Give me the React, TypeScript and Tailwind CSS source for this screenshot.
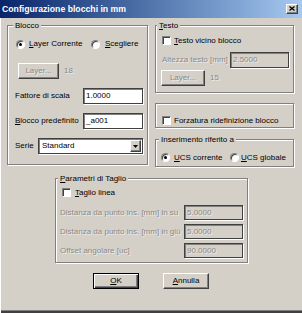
import React from 'react';

const dis = 'text-[#8a8a8a] [text-shadow:1px_1px_0_rgba(255,255,255,0.6)]';

const Group: React.FC<{ label?: React.ReactNode; labelClass?: string; className?: string; children?: React.ReactNode }> = ({
  label,
  labelClass = '',
  className = '',
  children,
}) => (
  <div className={`flex flex-col border border-[#808080] shadow-[inset_1px_1px_0_#ffffff,1px_1px_0_#ffffff] ${className}`}>
    {label && (
      <div className={`-mt-[6px] h-[11px] w-fit bg-[#d4d0c8] px-[2px] leading-[11px] ${labelClass}`}>{label}</div>
    )}
    {children}
  </div>
);

const Radio: React.FC<{ checked?: boolean }> = ({ checked }) => (
  <span className="flex h-[9px] w-[9px] shrink-0 items-center justify-center rounded-full border border-[#808080] border-r-white border-b-white bg-white shadow-[inset_1px_1px_0_#404040]">
    {checked && <span className="h-[3px] w-[3px] rounded-full bg-black" />}
  </span>
);

const Check: React.FC = () => (
  <span className="h-[9px] w-[9px] shrink-0 border border-[#808080] border-r-white border-b-white bg-white shadow-[inset_1px_1px_0_#404040]" />
);

const Field: React.FC<{ value: string; disabled?: boolean; className?: string }> = ({ value, disabled, className = '' }) => (
  <div
    className={`flex items-center border border-[#404040] pl-[2px] shadow-[inset_1px_1px_0_#808080,1px_1px_0_#ffffff] ${
      disabled ? `bg-[#d4d0c8] ${dis}` : 'bg-white'
    } ${className}`}
  >
    {value}
  </div>
);

const Btn: React.FC<{ children: React.ReactNode; disabled?: boolean; def?: boolean; className?: string }> = ({
  children,
  disabled,
  def,
  className = '',
}) => (
  <div
    className={`flex items-center justify-center bg-[#d4d0c8] ${
      def
        ? 'border border-black shadow-[inset_1px_1px_0_#ffffff,inset_-1px_-1px_0_#404040,inset_-2px_-2px_0_#808080]'
        : 'border border-t-white border-l-white border-r-[#404040] border-b-[#404040] shadow-[inset_-1px_-1px_0_#808080]'
    } ${disabled ? dis : ''} ${className}`}
  >
    {children}
  </div>
);

export default function App() {
  return (
    <div className="flex h-[313px] w-[302px] flex-col overflow-hidden bg-[#d4d0c8] font-['Liberation_Sans',Arial,sans-serif] text-[8px] leading-none text-black shadow-[inset_1px_0_0_#ffffff,inset_0_-2px_0_#404040,inset_0_-3px_0_#808080]">
      {/* title bar */}
      <div className="flex h-[18px] shrink-0 items-center justify-between bg-gradient-to-r from-[#0a246a] to-[#a6caf0] pl-[2px] pr-[4px]">
        <span className="text-[8.7px] font-bold text-white">Configurazione blocchi in mm</span>
        <span className="mt-[-1px] flex h-[10px] w-[12px] items-center justify-center border border-t-white border-l-white border-r-[#404040] border-b-[#404040] bg-[#d4d0c8] shadow-[inset_-1px_-1px_0_#808080]">
          <svg width="6" height="5" viewBox="0 0 6 5">
            <path d="M0.5 0.5 L5.5 4.5 M5.5 0.5 L0.5 4.5" stroke="#000" strokeWidth="1.3" />
          </svg>
        </span>
      </div>

      <div className="mt-[7px] flex items-start gap-[7px] pl-[7px]">
        {/* Blocco */}
        <Group label="Blocco" labelClass="ml-[5px]" className="h-[140px] w-[141px]">
          <div className="mt-[5px] flex h-[16px] items-center pl-[8px]">
            <div className="flex w-[75px] items-center gap-[4px]">
              <Radio checked />
              <span>
                <u>L</u>ayer Corrente
              </span>
            </div>
            <div className="flex items-center gap-[5px]">
              <Radio />
              <span>
                <u>S</u>cegliere
              </span>
            </div>
          </div>
          <div className="mt-[11px] flex h-[16px] items-center gap-[5px] pl-[10px]">
            <Btn disabled className="h-[16px] w-[41px]">
              Layer...
            </Btn>
            <span className={dis}>18</span>
          </div>
          <div className="mt-[9px] flex h-[16px] items-center pl-[7px] pr-[4px]">
            <span>Fattore di scala</span>
            <Field value="1.0000" className="ml-auto h-[16px] w-[60px]" />
          </div>
          <div className="mt-[9px] flex h-[16px] items-center pl-[7px] pr-[4px]">
            <span>
              <u>B</u>locco predefinito
            </span>
            <Field value="_a001" className="ml-auto h-[16px] w-[60px]" />
          </div>
          <div className="mt-[9px] flex h-[16px] items-center pl-[7px] pr-[4px]">
            <span>Serie</span>
            <div className="ml-auto flex h-[16px] w-[105px] items-center border border-[#404040] bg-white shadow-[inset_1px_1px_0_#808080,1px_1px_0_#ffffff]">
              <span className="flex-1 pl-[3px]">Standard</span>
              <span className="mr-[1px] flex h-[12px] w-[11px] items-center justify-center border border-t-white border-l-white border-r-[#404040] border-b-[#404040] bg-[#d4d0c8] shadow-[inset_-1px_-1px_0_#808080]">
                <svg width="5" height="3" viewBox="0 0 5 3">
                  <path d="M0 0 H5 L2.5 3 Z" fill="#000" />
                </svg>
              </span>
            </div>
          </div>
        </Group>

        {/* right column */}
        <div className="flex w-[139px] flex-col">
          <Group
            label={
              <>
                <u>T</u>esto
              </>
            }
            labelClass="ml-[1px]"
            className="h-[68px]"
          >
            <div className="mt-[3px] flex h-[13px] items-center gap-[3px] pl-[6px]">
              <Check />
              <span>
                <u>T</u>esto vicino blocco
              </span>
            </div>
            <div className="mt-[5px] flex h-[16px] items-center pl-[6px] pr-[4px]">
              <span className={dis}>Altezza testo [mm]</span>
              <Field value="2.5000" disabled className="ml-auto h-[16px] w-[59px]" />
            </div>
            <div className="mt-[2px] flex h-[16px] items-center gap-[5px] pl-[5px]">
              <Btn disabled className="h-[16px] w-[44px]">
                Layer...
              </Btn>
              <span className={dis}>15</span>
            </div>
          </Group>

          <Group className="mt-[10px] h-[25px]">
            <div className="mt-[11px] flex h-[11px] items-center gap-[3px] pl-[6px]">
              <Check />
              <span>Forzatura ridefinizione blocco</span>
            </div>
          </Group>

          <Group label="Inserimento riferito a" labelClass="ml-[3px]" className="mt-[11px] h-[28px]">
            <div className="mt-[7px] flex h-[11px] items-center pl-[5px]">
              <div className="flex w-[69px] items-center gap-[4px]">
                <Radio checked />
                <span>
                  <u>U</u>CS corrente
                </span>
              </div>
              <div className="flex items-center gap-[2px]">
                <Radio />
                <span>
                  <u>U</u>CS globale
                </span>
              </div>
            </div>
          </Group>
        </div>
      </div>

      {/* Parametri di Taglio */}
      <Group
        label={
          <>
            <u>P</u>arametri di Taglio
          </>
        }
        labelClass="ml-[2px]"
        className="ml-[55px] mt-[11px] h-[85px] w-[193px]"
      >
        <div className="mt-[3px] flex h-[11px] items-center gap-[4px] pl-[6px]">
          <Check />
          <span>
            <u>T</u>aglio linea
          </span>
        </div>
        <div className="mt-[7px] flex h-[15px] items-center pl-[4px] pr-[4px]">
          <span className={dis}>Distanza da punto ins. [mm] in su</span>
          <Field value="5.0000" disabled className="ml-auto h-[15px] w-[59px]" />
        </div>
        <div className="mt-[4px] flex h-[15px] items-center pl-[4px] pr-[4px]">
          <span className={dis}>Distanza da punto ins. [mm] in giù</span>
          <Field value="5.0000" disabled className="ml-auto h-[15px] w-[59px]" />
        </div>
        <div className="mt-[4px] flex h-[15px] items-center pl-[4px] pr-[4px]">
          <span className={dis}>Offset angolare [uc]</span>
          <Field value="90.0000" disabled className="ml-auto h-[15px] w-[59px]" />
        </div>
      </Group>

      <div className="mt-[10px] flex justify-center gap-[24px]">
        <Btn def className="h-[16px] w-[46px]">
          <u>O</u>K
        </Btn>
        <Btn className="h-[16px] w-[46px]">
          <u>A</u>nnulla
        </Btn>
      </div>
    </div>
  );
}
